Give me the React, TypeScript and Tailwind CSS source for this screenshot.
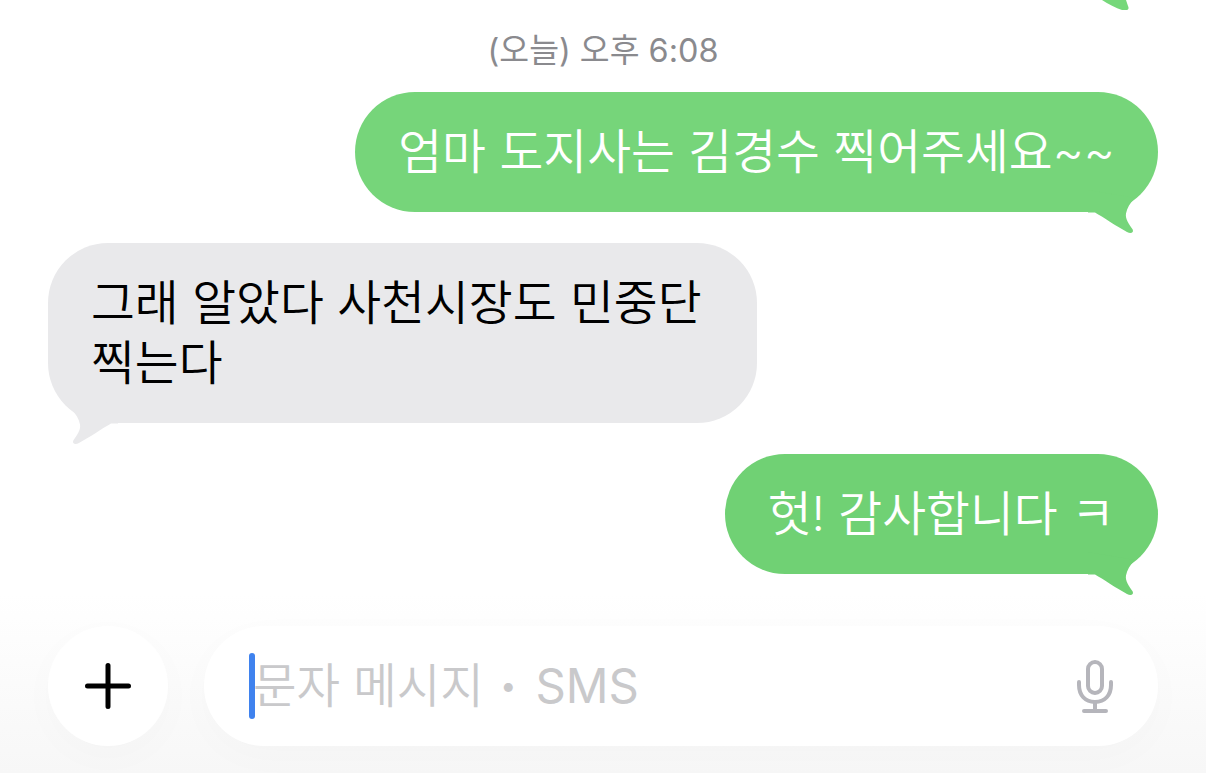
const font = { fontFamily: 'Inter, "Noto Sans CJK KR", sans-serif' };

const Tail = ({ flip, className }: { flip?: boolean; className: string }) => (
  <svg
    width="70"
    height="46"
    viewBox="0 0 70 46"
    className={`absolute bottom-[-24px] ${flip ? "left-0 -scale-x-100" : "right-0"} ${className}`}
  >
    <path d="M0 0 L0 22.5 L7 22.5 C15 27 28 36 39 42 C43 44 46 42.5 44.7 39.5 C41 34 37 29 38 23.5 C39 18 42 13 47 8 Z" />
  </svg>
);

const Bubble = ({
  children,
  left,
  className,
  tailColor,
}: {
  children: React.ReactNode;
  left?: boolean;
  className: string;
  tailColor: string;
}) => (
  <div
    className={`relative rounded-[60px] px-[43px] py-[30px] text-[47.7px] font-[350] leading-[60px] ${left ? "self-start" : "self-end"} ${className}`}
  >
    <Tail flip={left} className={tailColor} />
    <span className="relative">{children}</span>
  </div>
);

const App = () => {
  return (
    <div
      className="w-full h-[773px] overflow-hidden bg-white flex flex-col"
      style={font}
    >
      <svg width="40" height="10" viewBox="0 0 40 10" className="self-end mr-[70px] fill-[#76d87a]">
        <path d="M6 0 C12 4 20 8 26 10 C30 11 34 10 32 6 L30 0 Z" />
      </svg>
      <div className="flex-1 flex flex-col px-[48px]">
        <div className="h-[82px] flex items-center justify-center text-[32.4px] text-[#8a8a8e]">
          (오늘) 오후 6:08
        </div>
        <Bubble className="bg-[#76d57a] text-white" tailColor="fill-[#76d57a]">
          엄마 도지사는 김경수 찍어주세요~~
        </Bubble>
        <div className="h-[31px] shrink-0" />
        <Bubble left className="bg-[#e9e9eb] text-black w-[709px]" tailColor="fill-[#e9e9eb]">
          그래 알았다 사천시장도 민중단 찍는다
        </Bubble>
        <div className="h-[31px] shrink-0" />
        <Bubble className="bg-[#70d174] text-white" tailColor="fill-[#70d174]">
          헛! 감사합니다 ㅋ
        </Bubble>
      </div>
      <div className="h-[179px] shrink-0 flex items-start gap-[36px] px-[48px] pt-[32px] bg-gradient-to-b from-white to-[#f7f7f7]">
        <button className="w-[120px] h-[120px] rounded-full bg-white flex items-center justify-center shadow-[0_10px_40px_rgba(0,0,0,0.02)]">
          <svg width="50" height="50" viewBox="0 0 50 50" stroke="#000" strokeWidth="5" strokeLinecap="round">
            <path d="M4.5 25 H45.5 M25 4.5 V45.5" />
          </svg>
        </button>
        <div className="flex-1 h-[120px] rounded-[60px] bg-white flex items-center pl-[45px] pr-[44px] shadow-[0_10px_40px_rgba(0,0,0,0.02)]">
          <div className="relative z-10 w-[6px] h-[66px] rounded-full bg-[#3f82ee]" />
          <span className="flex-1 -ml-[2px] text-[47.3px] font-[350] text-[#c9c9cb] flex items-center">
            문자 메시지
            <span className="text-[33px] ml-[15px] mr-[18px]">•</span>
            <span className="font-normal">SMS</span>
          </span>
          <svg width="38" height="56" viewBox="0 0 38 56" fill="none" stroke="#b5b5bb" strokeWidth="4" strokeLinecap="round">
            <rect x="12" y="4" width="14" height="31" rx="7" />
            <path d="M3 24 V27 C3 37 9 44 19 44 C29 44 35 37 35 27 V24 M19 44 V52 M8 53 H30" />
          </svg>
        </div>
      </div>
    </div>
  );
};

export default App;
